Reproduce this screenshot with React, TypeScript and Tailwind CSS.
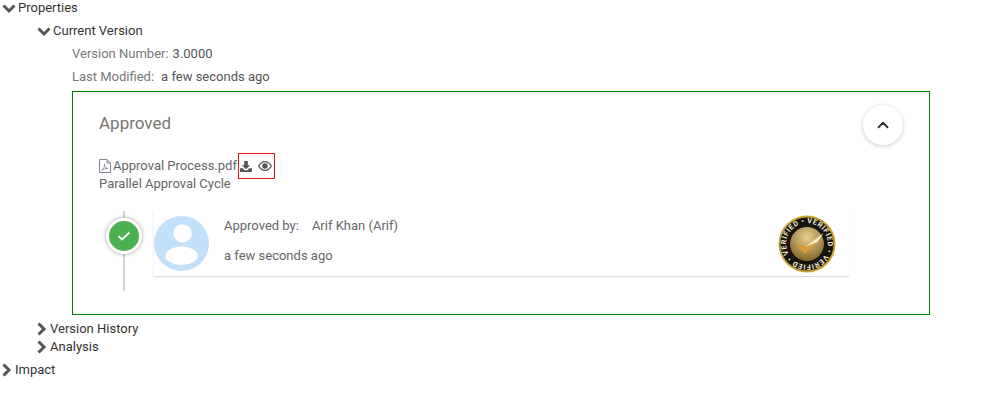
import { ChevronUp } from "lucide-react";
import type { ReactNode } from "react";

function Chevron({ open }: { open?: boolean }) {
  return (
    <svg viewBox="0 0 14 14" className="h-[14px] w-[14px] shrink-0 text-[#555]" fill="none">
      {open ? (
        <path d="M1.500 4.500l5.500 5.500 5.500-5.500" stroke="currentColor" strokeWidth="3" />
      ) : (
        <path d="M3.500 1.500l5.500 5.500-5.500 5.500" stroke="currentColor" strokeWidth="3" />
      )}
    </svg>
  );
}

function TreeRow({ open, className, children }: { open?: boolean; className: string; children: ReactNode }) {
  return (
    <div className={`flex items-center text-[13px] leading-[18px] text-[#333] ${className}`}>
      <Chevron open={open} />
      {children}
    </div>
  );
}

function PdfIcon() {
  return (
    <svg viewBox="0 0 12 14" className="h-[14px] w-[12px] shrink-0 text-[#7d8794]" fill="none" stroke="currentColor" strokeWidth="1">
      <path d="M.5.5h7.500l3.500 3.500v9.500H.5z" />
      <path d="M8 .5V4h3.500" />
      <path d="M2.500 11.500c2-1 3.500-4 3-6.500-.3 2 1 4 3.500 4.500-2-.3-4.500.5-6.500 2z" strokeWidth=".8" />
    </svg>
  );
}

function DownloadIcon() {
  return (
    <svg viewBox="0 0 13 12" className="h-[11px] w-[12px] text-[#555]" fill="currentColor">
      <path d="M4.500 0h4v4.500h2.500L6.500 9 2 4.500h2.500z" />
      <path d="M0 8h3l2 2h3l2-2h3v4H0z" />
    </svg>
  );
}

function EyeIcon() {
  return (
    <svg viewBox="0 0 14 10" className="h-[10px] w-[14px] text-[#555]" fill="currentColor">
      <path
        fillRule="evenodd"
        d="M7 0c3 0 5.500 2 7 5-1.500 3-4 5-7 5S1.500 8 0 5c1.500-3 4-5 7-5zm0 1.200C4.800 1.200 2.800 2.600 1.400 5 2.800 7.400 4.800 8.800 7 8.800S11.200 7.400 12.600 5C11.200 2.600 9.200 1.200 7 1.200z"
      />
      <circle cx="7" cy="5" r="2.700" />
    </svg>
  );
}

function VerifiedBadge() {
  return (
    <svg viewBox="0 0 60 60" className="h-[58px] w-[58px]">
      <defs>
        <radialGradient id="gold" cx="50%" cy="30%" r="75%">
          <stop offset="0%" stopColor="#e6cf92" />
          <stop offset="100%" stopColor="#7d5f20" />
        </radialGradient>
        <path id="ring" d="M30 8.500a21.500 21.500 0 1 1-.01 0" />
      </defs>
      <circle cx="30" cy="30" r="29.500" fill="#c9a032" />
      <circle cx="30" cy="30" r="27.500" fill="#17140f" />
      <circle cx="30" cy="30" r="17.500" fill="url(#gold)" />
      <text fontSize="7.500" fontWeight="700" fill="#efe9d2" fontFamily="Roboto, sans-serif">
        <textPath href="#ring" textLength="132">
          VERIFIED • VERIFIED • VERIFIED •
        </textPath>
      </text>
      <path d="M19 30l9 10 19-21-19 14z" fill="#dc9c38" />
      <path d="M28 33l19-14-6 9z" fill="#f8ebc4" />
    </svg>
  );
}

export default function App() {
  return (
    <div className="h-[417px] w-[988px] overflow-hidden bg-white pt-px font-['Roboto',sans-serif]">
      <TreeRow open className="h-[14px] gap-[2px] pl-[2px]">
        Properties
      </TreeRow>
      <TreeRow open className="mt-[7px] h-[18px] gap-[2px] pl-[37px]">
        Current Version
      </TreeRow>
      <div className="mt-[5px] flex h-[18px] items-center pl-[72px] text-[13px] text-[#777]">
        Version Number:<span className="ml-1 text-[#555]">3.0000</span>
      </div>
      <div className="mt-[5px] flex h-[18px] items-center pl-[72px] text-[13px] text-[#777]">
        Last Modified:<span className="ml-[7px] text-[#555]">a few seconds ago</span>
      </div>

      <div className="ml-[72px] mt-[5px] h-[224px] w-[858px] border border-[#008000] px-[26px] pt-[13px]">
        <div className="flex items-start justify-between">
          <div className="pt-[7px] text-[17px] leading-[22px] text-[#77776e]">Approved</div>
          <button className="flex h-[40px] w-[40px] items-center justify-center rounded-full bg-white shadow-[0_1px_4px_rgba(0,0,0,0.22)]">
            <ChevronUp className="h-[18px] w-[18px] text-[#333]" strokeWidth={2.500} />
          </button>
        </div>

        <div className="mt-[8px] flex h-[26px] items-center text-[13px] text-[#666]">
          <PdfIcon />
          <span className="ml-[2px]">Approval Process.pdf</span>
          <span className="ml-px flex h-[26px] w-[37px] items-center justify-center gap-[6px] border border-[#e8141c]">
            <DownloadIcon />
            <EyeIcon />
          </span>
        </div>
        <div className="-mt-[3px] text-[13px] leading-[16px] text-[#666]">Parallel Approval Cycle</div>

        <div className="mt-[19px] flex">
          <div className="relative ml-[7px] flex w-[36px] shrink-0 justify-center">
            <div className="h-[80px] w-[2px] bg-[#d4d4d4]" />
            <div className="absolute top-[7px] flex h-[36px] w-[36px] items-center justify-center rounded-full border-[3px] border-white bg-[#4caf50] shadow-[0_0_4px_rgba(0,0,0,0.35)]">
              <svg viewBox="0 0 14 10" className="h-[10px] w-[14px]" fill="none" stroke="white" strokeWidth="1.800">
                <path d="M1.500 5l3.500 3.500L12.500 1.500" />
              </svg>
            </div>
          </div>

          <div className="ml-[11px] flex h-[66px] w-[696px] items-center border-b border-l border-b-[#ddd] border-l-[#f4f4f4] shadow-[0_1px_2px_rgba(0,0,0,0.05)]">
            <svg viewBox="0 0 54 54" className="h-[55px] w-[55px] shrink-0">
              <circle cx="27" cy="27" r="27" fill="#c3e0fa" />
              <circle cx="28" cy="17" r="9" fill="white" />
              <ellipse cx="27" cy="39" rx="16" ry="9" fill="white" />
            </svg>
            <div className="-mt-[5px] ml-[15px] flex-1 text-[13px] text-[#666]">
              <div className="flex h-[20px] items-center">
                Approved by:<span className="ml-[13px]">Arif Khan (Arif)</span>
              </div>
              <div className="mt-[10px] flex h-[20px] items-center">a few seconds ago</div>
            </div>
            <div className="mr-[13px]">
              <VerifiedBadge />
            </div>
          </div>
        </div>
      </div>

      <TreeRow className="mt-[5px] h-[18px] gap-px pl-[35px]">Version History</TreeRow>
      <TreeRow className="h-[18px] gap-px pl-[35px]">Analysis</TreeRow>
      <TreeRow className="mt-[5px] h-[18px] gap-px pl-0">Impact</TreeRow>
    </div>
  );
}
